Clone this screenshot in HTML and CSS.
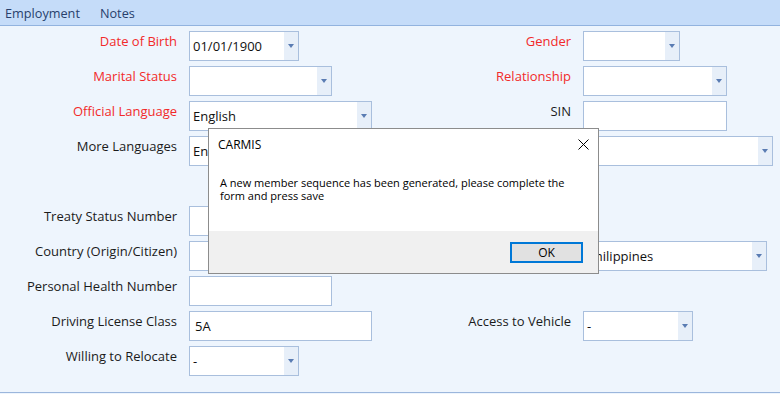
FILE: index.html
```html
<!DOCTYPE html>
<html lang="en">
  <head>
    <meta charset="UTF-8" />
    <title>Member Details</title>
    <link rel="stylesheet" href="styles.css">
  </head>
  <body>
    <div class="tabs">
      <span class="tab">Employment</span>
      <span class="tab">Notes</span>
    </div>

    <div class="form">
      <!-- row 1 -->
      <label class="lbl req">Date of Birth</label>
      <div class="field">
        <div class="combo w110"><span class="val">01/01/1900</span><span class="drop"></span></div>
      </div>
      <label class="lbl req">Gender</label>
      <div class="field">
        <div class="combo w97"><span class="val"></span><span class="drop"></span></div>
      </div>

      <!-- row 2 -->
      <label class="lbl req">Marital Status</label>
      <div class="field">
        <div class="combo w143"><span class="val"></span><span class="drop"></span></div>
      </div>
      <label class="lbl req">Relationship</label>
      <div class="field">
        <div class="combo w144"><span class="val"></span><span class="drop"></span></div>
      </div>

      <!-- row 3 -->
      <label class="lbl req">Official Language</label>
      <div class="field">
        <div class="combo w183"><span class="val">English</span><span class="drop"></span></div>
      </div>
      <label class="lbl">SIN</label>
      <div class="field">
        <div class="text w144"></div>
      </div>

      <!-- row 4 -->
      <label class="lbl">More Languages</label>
      <div class="field span3">
        <div class="combo w584"><span class="val">English</span><span class="drop"></span></div>
      </div>

      <!-- row 5 (empty) -->
      <div class="blank"></div>

      <!-- row 6 -->
      <label class="lbl">Treaty Status Number</label>
      <div class="field">
        <div class="text w143"></div>
      </div>
      <div class="lbl"></div>
      <div class="field"></div>

      <!-- row 7 -->
      <label class="lbl">Country (Origin/Citizen)</label>
      <div class="field">
        <div class="combo w143"><span class="val"></span><span class="drop"></span></div>
      </div>
      <div class="lbl"></div>
      <div class="field">
        <div class="combo w184"><span class="val">Philippines</span><span class="drop"></span></div>
      </div>

      <!-- row 8 -->
      <label class="lbl">Personal Health Number</label>
      <div class="field">
        <div class="text w143"></div>
      </div>
      <div class="lbl"></div>
      <div class="field"></div>

      <!-- row 9 -->
      <label class="lbl">Driving License Class</label>
      <div class="field">
        <div class="text w183">5A</div>
      </div>
      <label class="lbl">Access to Vehicle</label>
      <div class="field">
        <div class="combo w110"><span class="val">-</span><span class="drop"></span></div>
      </div>

      <!-- row 10 -->
      <label class="lbl">Willing to Relocate</label>
      <div class="field">
        <div class="combo w110"><span class="val">-</span><span class="drop"></span></div>
      </div>
    </div>

    <div class="dialog">
      <div class="dlg-title">
        <span>CARMIS</span>
        <svg class="dlg-close" width="11" height="11" viewBox="0 0 11 11">
          <path d="M0.5 0.5 L10.5 10.5 M10.5 0.5 L0.5 10.5" stroke="#000" stroke-width="1" fill="none" />
        </svg>
      </div>
      <div class="dlg-msg">
        A new member sequence has been generated, please complete the form and press save
      </div>
      <div class="dlg-foot">
        <button class="ok-btn">OK</button>
      </div>
    </div>
  </body>
</html>
```

FILE: styles.css
```css
body {
  margin: 0;
  padding: 0;
  font-family: "Open Sans", "Noto Sans", sans-serif;
  font-size: 13px;
  color: #1b1b1b;
  background-color: #eef5fd;
  width: 780px;
  height: 394px;
  overflow: hidden;
}

.tabs {
  height: 26px;
  box-sizing: border-box;
  background-color: #c5dcf9;
  border-bottom: 1px solid #92b3df;
  display: flex;
  align-items: center;
  gap: 20px;
  padding-left: 5px;
}

.tab {
  font-size: 12.7px;
  color: #283f6c;
}

.form {
  height: 367px;
  box-sizing: border-box;
  border-bottom: 1px solid #9bb6dc;
  padding-top: 5px;
  display: grid;
  grid-template-columns: 177px 200px 170px 1fr;
  grid-auto-rows: 30px;
  column-gap: 12px;
  row-gap: 5px;
}

.lbl {
  text-align: right;
  line-height: 21px;
  white-space: nowrap;
}

.req {
  color: #f22a2a;
}

.field {
  display: flex;
}

.span3 {
  grid-column: span 3;
}

.blank {
  grid-column: 1 / -1;
}

.text,
.combo {
  height: 30px;
  box-sizing: border-box;
  border: 1px solid #a9bfdd;
  background-color: #fff;
  font-size: 13px;
  color: #111;
  display: flex;
  align-items: center;
}

.text {
  padding-left: 5px;
}

.combo .val {
  flex: 1;
  padding-left: 3px;
  white-space: nowrap;
  overflow: hidden;
}

.drop {
  width: 14px;
  align-self: stretch;
  background-color: #e7eff9;
  display: flex;
  align-items: center;
  justify-content: center;
}

.drop::after {
  content: "";
  border-left: 3.5px solid transparent;
  border-right: 3.5px solid transparent;
  border-top: 4px solid #5a7cb3;
}

.w97 { width: 97px; }
.w110 { width: 110px; }
.w143 { width: 143px; }
.w144 { width: 144px; }
.w183 { width: 183px; }
.w184 { width: 184px; }
.w584 { width: 584px; }

/* message box over the form */
.dialog {
  position: absolute;
  left: 208px;
  top: 128px;
  width: 391px;
  height: 146px;
  box-sizing: border-box;
  border: 1px solid #8c8c8c;
  background-color: #fff;
  display: flex;
  flex-direction: column;
  color: #000;
}

.dlg-title {
  height: 30px;
  display: flex;
  align-items: center;
  justify-content: space-between;
  padding: 0 9px;
  font-size: 12px;
}

.dlg-msg {
  flex: 1;
  padding: 18px 24px 0 11px;
  font-size: 11px;
  line-height: 12.5px;
}

.dlg-foot {
  height: 42px;
  background-color: #f0f0f0;
  display: flex;
  justify-content: flex-end;
  align-items: center;
  padding-right: 15px;
}

.ok-btn {
  width: 73px;
  height: 21px;
  border: 2px solid #0078d7;
  background-color: #e1e1e1;
  font-family: inherit;
  font-size: 12px;
  color: #000;
  padding: 0;
}
```
